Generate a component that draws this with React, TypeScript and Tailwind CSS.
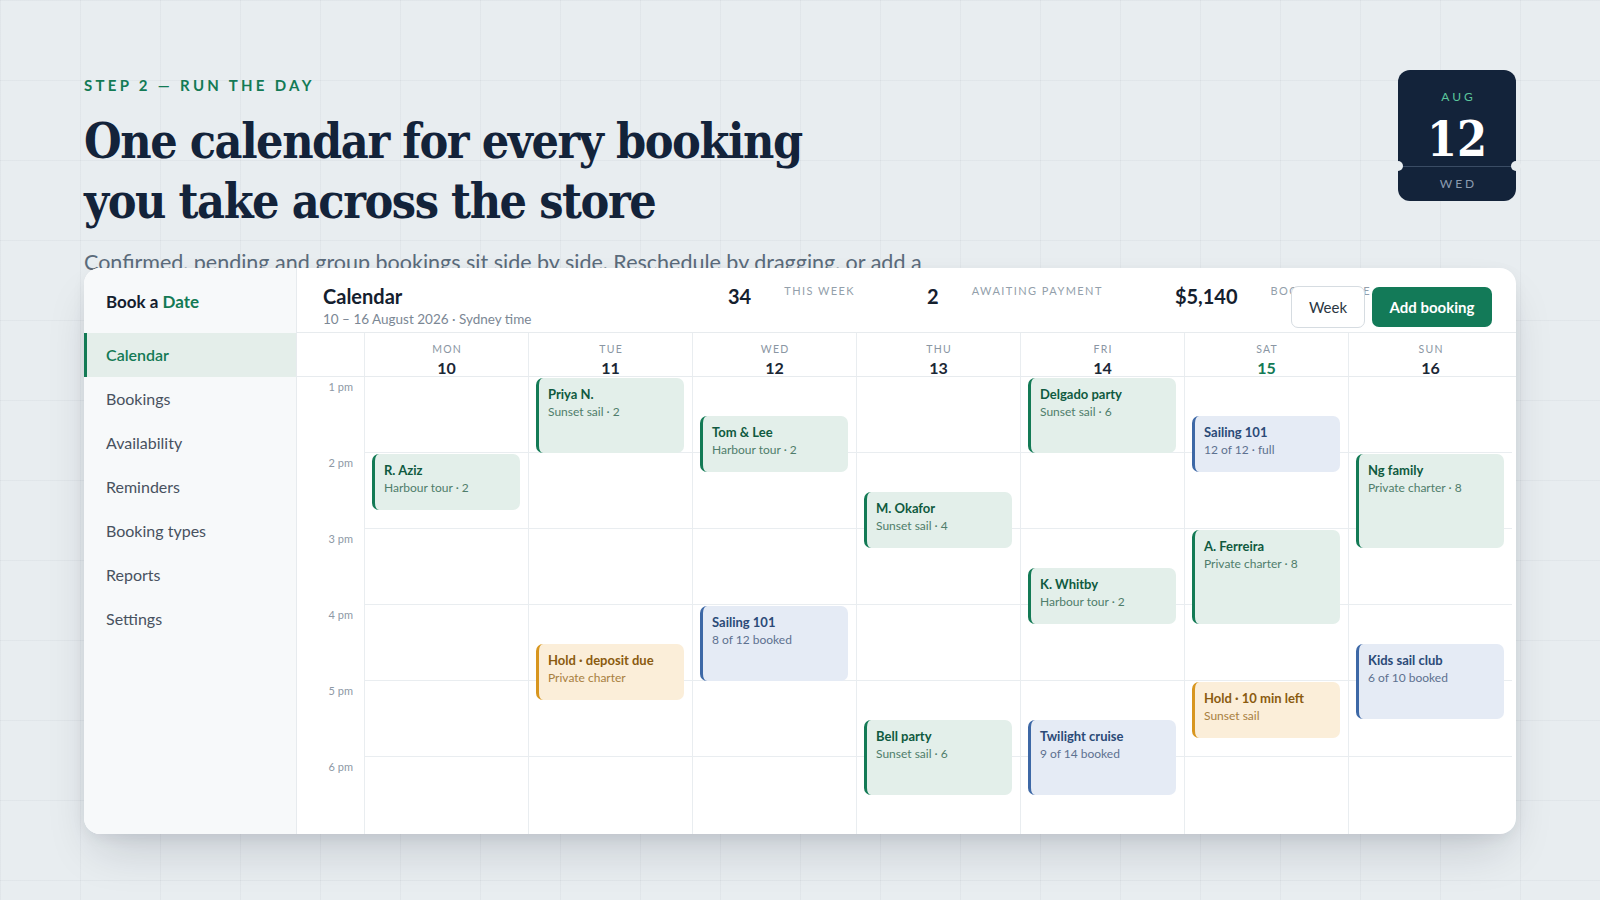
import React from "react";

type Kind = "green" | "blue" | "amber";
type Ev = { day: number; start: number; dur: number; title: string; sub: string; kind: Kind };

const days = [
  { n: "MON", d: 10 },
  { n: "TUE", d: 11 },
  { n: "WED", d: 12 },
  { n: "THU", d: 13 },
  { n: "FRI", d: 14 },
  { n: "SAT", d: 15 },
  { n: "SUN", d: 16 },
];

const events: Ev[] = [
  { day: 0, start: 1, dur: 0.75, title: "R. Aziz", sub: "Harbour tour · 2", kind: "green" },
  { day: 1, start: 0, dur: 1, title: "Priya N.", sub: "Sunset sail · 2", kind: "green" },
  { day: 1, start: 3.5, dur: 0.75, title: "Hold · deposit due", sub: "Private charter", kind: "amber" },
  { day: 2, start: 0.5, dur: 0.75, title: "Tom & Lee", sub: "Harbour tour · 2", kind: "green" },
  { day: 2, start: 3, dur: 1, title: "Sailing 101", sub: "8 of 12 booked", kind: "blue" },
  { day: 3, start: 1.5, dur: 0.75, title: "M. Okafor", sub: "Sunset sail · 4", kind: "green" },
  { day: 3, start: 4.5, dur: 1, title: "Bell party", sub: "Sunset sail · 6", kind: "green" },
  { day: 4, start: 0, dur: 1, title: "Delgado party", sub: "Sunset sail · 6", kind: "green" },
  { day: 4, start: 2.5, dur: 0.75, title: "K. Whitby", sub: "Harbour tour · 2", kind: "green" },
  { day: 4, start: 4.5, dur: 1, title: "Twilight cruise", sub: "9 of 14 booked", kind: "blue" },
  { day: 5, start: 0.5, dur: 0.75, title: "Sailing 101", sub: "12 of 12 · full", kind: "blue" },
  { day: 5, start: 2, dur: 1.25, title: "A. Ferreira", sub: "Private charter · 8", kind: "green" },
  { day: 5, start: 4, dur: 0.75, title: "Hold · 10 min left", sub: "Sunset sail", kind: "amber" },
  { day: 6, start: 1, dur: 1.25, title: "Ng family", sub: "Private charter · 8", kind: "green" },
  { day: 6, start: 3.5, dur: 1, title: "Kids sail club", sub: "6 of 10 booked", kind: "blue" },
];

const kindCls: Record<Kind, { box: string; t: string; s: string }> = {
  green: { box: "bg-[#e3efea] border-[#137a55]", t: "text-[#0f5a40]", s: "text-[#4f7d6b]" },
  blue: { box: "bg-[#e5ebf5] border-[#3d68a6]", t: "text-[#2b4a77]", s: "text-[#5d7190]" },
  amber: { box: "bg-[#fbeed9] border-[#d8961f]", t: "text-[#8a5b0f]", s: "text-[#a8803f]" },
};

const hours = ["1 pm", "2 pm", "3 pm", "4 pm", "5 pm", "6 pm"];
const nav = ["Calendar", "Bookings", "Availability", "Reminders", "Booking types", "Reports", "Settings"];
const ROW = 76;

export default function App() {
  return (
    <div
      className="relative min-h-[900px] w-full overflow-hidden bg-[#e8edf0] bg-[linear-gradient(to_right,rgba(15,23,42,0.035)_1px,transparent_1px),linear-gradient(to_bottom,rgba(15,23,42,0.035)_1px,transparent_1px)] bg-[size:80px_80px] px-[84px] pt-[70px] font-['Lato',sans-serif]"
    >
      {/* Header */}
      <div className="flex h-[198px] items-start justify-between">
        <div className="mt-[5px]">
          <div className="text-[15px] font-bold leading-[20px] tracking-[0.22em] text-[#137a55]">
            STEP 2 — RUN THE DAY
          </div>
          <h1 className="mt-[16px] font-['DejaVu_Serif_Condensed','DejaVu_Serif',serif] text-[48px] font-bold leading-[60px] tracking-[-0.03em] text-[#13233a] font-stretch-condensed">
            One calendar for every booking
            <br />
            you take across the store
          </h1>
          <p className="mt-[16px] max-w-[880px] text-[21.5px] leading-[30px] text-[#5b6b7b]">
            Confirmed, pending and group bookings sit side by side. Reschedule by dragging, or add a booking
            in two clicks.
          </p>
        </div>
        <div className="relative flex h-[131px] w-[118px] flex-col rounded-[12px] bg-[#13233a]">
          <div className="flex h-[96px] flex-col items-center pt-[19px]">
            <div className="pl-[0.25em] text-[12px] leading-[16px] tracking-[0.25em] text-[#5cc69c]">AUG</div>
            <div className="mt-[10px] font-['DejaVu_Serif_Condensed','DejaVu_Serif',serif] text-[48px] font-bold leading-[48px] text-white font-stretch-condensed">
              12
            </div>
          </div>
          <div className="h-px bg-[#3a4c64]" />
          <div className="flex flex-1 items-center justify-center pl-[0.25em] text-[12px] tracking-[0.25em] text-[#8b9bb0]">
            WED
          </div>
          <div className="absolute left-[-5px] top-[91px] h-[10px] w-[10px] rounded-full bg-[#e8edf0]" />
          <div className="absolute right-[-5px] top-[91px] h-[10px] w-[10px] rounded-full bg-[#e8edf0]" />
        </div>
      </div>

      {/* Card */}
      <div className="relative z-10 flex h-[566px] overflow-hidden rounded-[16px] bg-white shadow-[0_24px_48px_-12px_rgba(15,23,42,0.18),0_4px_14px_rgba(15,23,42,0.06)]">
        {/* Sidebar */}
        <aside className="flex w-[213px] flex-none flex-col border-r border-[#e7ebee] bg-[#f7f9fa]">
          <div className="flex h-[65px] items-center px-[22px] pt-[3px] text-[17px] font-bold text-[#14202e]">
            Book a&nbsp;<span className="text-[#137a55]">Date</span>
          </div>
          <nav className="flex flex-col">
            {nav.map((n, i) =>
              i === 0 ? (
                <div
                  key={n}
                  className="flex h-[44px] items-center border-l-[3px] border-[#137a55] bg-[#e4eeea] pl-[19px] text-[16px] font-semibold text-[#137a55]"
                >
                  {n}
                </div>
              ) : (
                <div key={n} className="flex h-[44px] items-center pl-[22px] text-[16px] text-[#48525f]">
                  {n}
                </div>
              )
            )}
          </nav>
        </aside>

        {/* Main */}
        <div className="flex min-w-0 flex-1 flex-col">
          <div className="relative flex h-[65px] flex-none items-start border-b border-[#e7ebee] pl-[26px] pt-[14px]">
            <div className="w-[405px] flex-none">
              <div className="text-[20px] font-bold leading-[28px] text-[#14202e]">Calendar</div>
              <div className="text-[13.5px] leading-[18px] text-[#7b8794]">10 – 16 August 2026 · Sydney time</div>
            </div>
            <div className="flex items-start gap-[72px]">
              {[
                ["34", "THIS WEEK"],
                ["2", "AWAITING PAYMENT"],
                ["$5,140", "BOOKED VALUE"],
              ].map(([v, l]) => (
                <div key={l} className="flex items-start">
                  <div className="text-[20px] font-bold leading-[28px] text-[#14202e]">{v}</div>
                  <div className="ml-[33px] mt-[1px] text-[11px] leading-[16px] tracking-[0.13em] text-[#939fab]">{l}</div>
                </div>
              ))}
            </div>
            <div className="absolute right-[24px] top-[18px] flex items-center gap-[7px]">
              <button className="h-[42px] w-[74px] rounded-[7px] border border-[#d6dce1] bg-white text-[15px] text-[#2b3642]">
                Week
              </button>
              <button className="h-[40px] w-[120px] rounded-[7px] bg-[#137a58] text-[15px] font-bold text-white">
                Add booking
              </button>
            </div>
          </div>

          {/* Day header */}
          <div className="flex h-[44px] flex-none border-b border-[#e7ebee] pr-[4px]">
            <div className="w-[67px] flex-none" />
            {days.map((d) => (
              <div key={d.n} className="flex flex-1 flex-col items-center border-l border-[#e9edf0] pt-[9px]">
                <div className="pl-[0.12em] text-[10.5px] leading-[14px] tracking-[0.12em] text-[#8a96a3]">{d.n}</div>
                <div
                  className={`mt-[2px] text-[16px] font-bold leading-[20px] ${
                    d.d === 15 ? "text-[#137a55]" : "text-[#1b2736]"
                  }`}
                >
                  {d.d}
                </div>
              </div>
            ))}
          </div>

          {/* Body */}
          <div className="flex flex-1 pr-[4px]">
            <div className="flex w-[67px] flex-none flex-col">
              {hours.map((h) => (
                <div key={h} className="h-[76px] pr-[11px] pt-[3px] text-right text-[11px] leading-[14px] text-[#8d98a5]">
                  {h}
                </div>
              ))}
            </div>
            {days.map((d, di) => (
              <div key={d.n} className="relative flex flex-1 flex-col border-l border-[#e9edf0]">
                {hours.map((h, hi) => (
                  <div key={h} className={`h-[76px] ${hi < 5 ? "border-b border-[#e9edf0]" : ""}`} />
                ))}
                {events
                  .filter((e) => e.day === di)
                  .map((e) => {
                    const k = kindCls[e.kind];
                    return (
                      <div
                        key={e.title + e.start}
                        className={`absolute left-[7px] right-[8px] rounded-[7px] border-l-[3px] pl-[9px] pt-[8px] ${k.box}`}
                        style={{ top: e.start * ROW + 1, height: e.dur * ROW - 1 }}
                      >
                        <div className={`text-[13px] font-bold leading-[17px] ${k.t}`}>{e.title}</div>
                        <div className={`text-[12px] leading-[17px] ${k.s}`}>{e.sub}</div>
                      </div>
                    );
                  })}
              </div>
            ))}
          </div>
        </div>
      </div>
    </div>
  );
}
